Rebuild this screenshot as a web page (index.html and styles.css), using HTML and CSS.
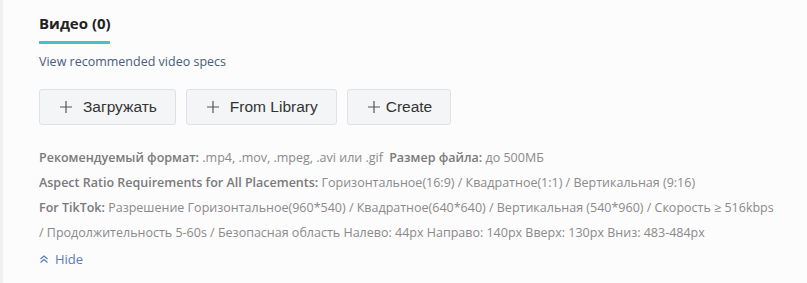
FILE: index.html
```html
<!DOCTYPE html>
<html lang="ru">
<head>
    <meta charset="UTF-8">
    <title>Видео</title>
    <link rel="stylesheet" href="styles.css">
</head>
<body>
    <div class="panel">
        <div class="tabs">
            <div class="tab active">Видео (0)</div>
        </div>
        <a class="specs-link" href="#">View recommended video specs</a>
        <div class="actions">
            <button class="btn">
                <svg class="plus" width="12" height="12" viewBox="0 0 12 12"><path d="M6 0 V12 M0 6 H12" stroke="currentColor" stroke-width="1.2"/></svg>
                Загружать
            </button>
            <button class="btn">
                <svg class="plus" width="12" height="12" viewBox="0 0 12 12"><path d="M6 0 V12 M0 6 H12" stroke="currentColor" stroke-width="1.2"/></svg>
                From Library
            </button>
            <button class="btn btn-tight">
                <svg class="plus" width="12" height="12" viewBox="0 0 12 12"><path d="M6 0 V12 M0 6 H12" stroke="currentColor" stroke-width="1.2"/></svg>
                Create
            </button>
        </div>
        <div class="specs">
            <p><b>Рекомендуемый формат:</b> .mp4, .mov, .mpeg, .avi или .gif <b class="gap">Размер файла:</b> до 500МБ</p>
            <p><b>Aspect Ratio Requirements for All Placements:</b> Горизонтальное(16:9) / Квадратное(1:1) / Вертикальная (9:16)</p>
            <p><b>For TikTok:</b> Разрешение Горизонтальное(960*540) / Квадратное(640*640) / Вертикальная (540*960) / Скорость ≥ 516kbps / Продолжительность 5-60s / Безопасная область Налево: 44px Направо: 140px Вверх: 130px Вниз: 483-484px</p>
        </div>
        <a class="toggle" href="#">
            <svg width="10" height="10" viewBox="0 0 10 10"><path d="M1.5 5 L5 2 L8.5 5 M1.5 8.5 L5 5.5 L8.5 8.5" fill="none" stroke="currentColor" stroke-width="1.3"/></svg>
            Hide
        </a>
    </div>
</body>
</html>
```

FILE: styles.css
```css
body {
    margin: 0;
    background: #fcfcfd;
    font-family: "Open Sans", sans-serif;
}

.panel {
    border-left: 3px solid #eef0f2;
    padding: 13px 20px 0 36px;
    height: 270px;
}

.tabs {
    display: flex;
}

.tab {
    font-size: 15px;
    font-weight: 700;
    color: #222;
    padding: 0 0 8px;
    border-bottom: 3px solid #45c1c7;
    width: 71px;
    white-space: nowrap;
}

.specs-link {
    display: block;
    margin-top: 9px;
    font-size: 12.5px;
    color: #4b5b7c;
    text-decoration: none;
}

.actions {
    display: flex;
    gap: 10px;
    margin-top: 19px;
}

.btn {
    display: inline-flex;
    align-items: center;
    gap: 11px;
    font-family: "Liberation Sans", Arial, sans-serif;
    font-size: 15.5px;
    color: #333;
    background: #f4f5f7;
    border: 1px solid #dfe1e4;
    border-radius: 3px;
    height: 36px;
    padding: 0 18px 0 20px;
    cursor: pointer;
}

.btn-tight {
    gap: 6px;
}

.plus {
    color: #555;
}

.specs {
    margin-top: 20px;
    width: 735px;
    font-size: 12.5px;
    line-height: 25px;
    color: #8a8a8a;
}

.specs p {
    margin: 0;
}

.specs b {
    font-weight: 600;
    color: #7a7a7a;
}

.specs .gap {
    margin-left: 3px;
}

.toggle {
    display: inline-flex;
    align-items: center;
    gap: 6px;
    margin-top: 5px;
    font-size: 13px;
    color: #5a7bb5;
    text-decoration: none;
}
```
